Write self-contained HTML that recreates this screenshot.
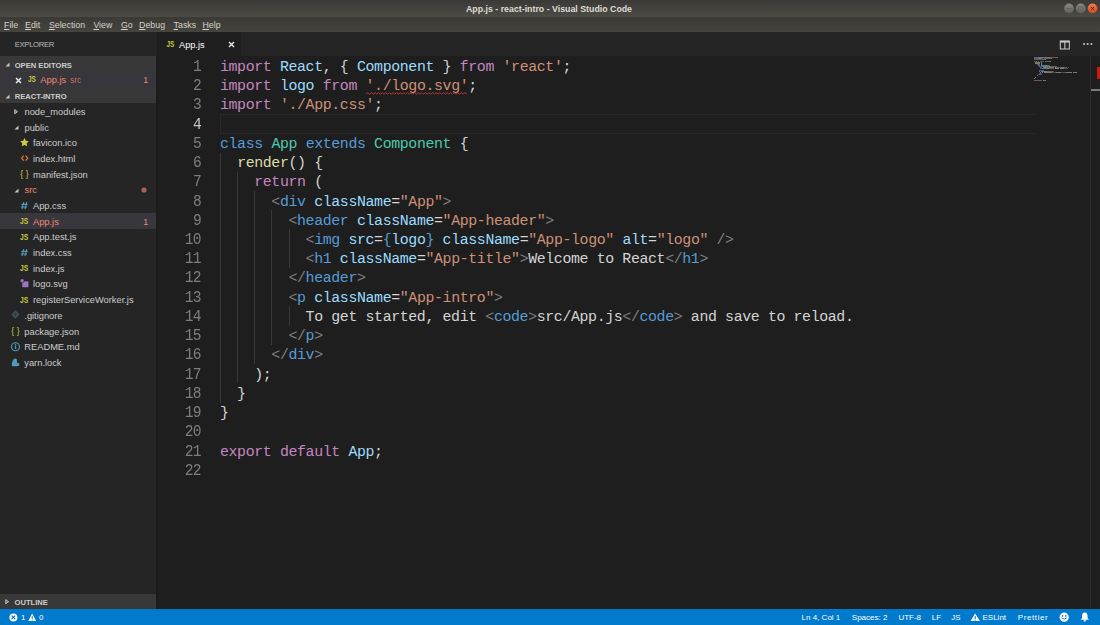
<!DOCTYPE html>
<html><head><meta charset="utf-8">
<style>
*{margin:0;padding:0;box-sizing:border-box}
html,body{width:1100px;height:625px;overflow:hidden;background:#1e1e1e;font-family:"Liberation Sans",sans-serif}
.r{position:absolute}
.t{position:absolute;white-space:pre}
u{text-decoration:underline;text-underline-offset:0.6px;text-decoration-thickness:0.8px}
</style></head><body>
<div class="r" style="left:0px;top:0px;width:1100px;height:17px;background:linear-gradient(#3a3935,#4c4b46);"></div>
<div class="t" style="left:466.00px;top:-1px;font-size:8.8px;line-height:20px;color:#dfdbd2;font-weight:700">App.js - react-intro - Visual Studio Code</div>
<svg class="r" style="left:1063px;top:3px" width="36" height="11" viewBox="0 0 36 11"><defs><linearGradient id="gb" x1="0" y1="0" x2="0" y2="1"><stop offset="0" stop-color="#8b8984"/><stop offset="1" stop-color="#62605b"/></linearGradient><linearGradient id="go" x1="0" y1="0" x2="0" y2="1"><stop offset="0" stop-color="#f47a4a"/><stop offset="1" stop-color="#d9481a"/></linearGradient></defs><circle cx="6" cy="5.4" r="4.8" fill="url(#gb)"/><rect x="3.7" y="5" width="4.6" height="1.1" fill="#62605b"/><circle cx="17.8" cy="5.4" r="4.8" fill="url(#gb)"/><rect x="15.5" y="3.8" width="4.6" height="3.3" fill="none" stroke="#62605b" stroke-width="0.9"/><circle cx="29.5" cy="5.4" r="4.8" fill="url(#go)"/><path d="M28.1 4 L30.9 6.8 M30.9 4 L28.1 6.8" stroke="#4a2a1a" stroke-width="1"/></svg>
<div class="r" style="left:0px;top:17px;width:1100px;height:15px;background:linear-gradient(#3b3a36,#42413c 85%,#47453f);"></div>
<div class="t" style="left:4.00px;top:15px;font-size:8.8px;line-height:20px;color:#d6d2c9"><u>F</u>ile</div>
<div class="t" style="left:25.10px;top:15px;font-size:8.8px;line-height:20px;color:#d6d2c9"><u>E</u>dit</div>
<div class="t" style="left:48.90px;top:15px;font-size:8.8px;line-height:20px;color:#d6d2c9"><u>S</u>election</div>
<div class="t" style="left:93.40px;top:15px;font-size:8.8px;line-height:20px;color:#d6d2c9"><u>V</u>iew</div>
<div class="t" style="left:120.90px;top:15px;font-size:8.8px;line-height:20px;color:#d6d2c9"><u>G</u>o</div>
<div class="t" style="left:139.10px;top:15px;font-size:8.8px;line-height:20px;color:#d6d2c9"><u>D</u>ebug</div>
<div class="t" style="left:173.60px;top:15px;font-size:8.8px;line-height:20px;color:#d6d2c9"><u>T</u>asks</div>
<div class="t" style="left:202.50px;top:15px;font-size:8.8px;line-height:20px;color:#d6d2c9"><u>H</u>elp</div>
<div class="r" style="left:0px;top:32px;width:156px;height:577px;background:#252526;"></div>
<div class="t" style="left:14.80px;top:35px;font-size:7.7px;line-height:20px;color:#bbbbbb;letter-spacing:-0.35px">EXPLORER</div>
<div class="r" style="left:0px;top:56.4px;width:156px;height:15.69px;background:#383838;"></div>
<svg class="r" style="left:5px;top:62.4px" width="5" height="5" viewBox="0 0 5 5"><path d="M4.5 0.5 L4.5 4.5 L0.5 4.5 Z" fill="#c5c5c5"/></svg>
<div class="t" style="left:14.70px;top:56px;font-size:7.6px;line-height:20px;color:#cccccc;font-weight:700">OPEN EDITORS</div>
<div class="r" style="left:0px;top:72.09px;width:156px;height:15.69px;background:#36363c;"></div>
<svg class="r" style="left:14.5px;top:76.69px" width="7" height="7" viewBox="0 0 7 7"><path d="M1 1 L6 6 M6 1 L1 6" stroke="#e8e8e8" stroke-width="1.5"/></svg>
<svg class="r" style="left:27.5px;top:74.29px" width="10" height="9" viewBox="0 0 10 9"><text x="0" y="8" font-family="Liberation Sans" font-weight="700" font-size="8.4" fill="#cbcb41" textLength="7.9" lengthAdjust="spacingAndGlyphs">JS</text></svg>
<div class="t" style="left:40.30px;top:70px;font-size:9.3px;line-height:20px;color:#f48771">App.js</div>
<div class="t" style="left:69.90px;top:70px;font-size:8.6px;line-height:20px;color:#c5705f">src</div>
<div class="t" style="left:143.30px;top:70px;font-size:8.8px;line-height:20px;color:#f48771">1</div>
<div class="r" style="left:0px;top:87.78px;width:156px;height:15.69px;background:#383838;"></div>
<svg class="r" style="left:5px;top:93.78px" width="5" height="5" viewBox="0 0 5 5"><path d="M4.5 0.5 L4.5 4.5 L0.5 4.5 Z" fill="#c5c5c5"/></svg>
<div class="t" style="left:14.70px;top:87px;font-size:7.6px;line-height:20px;color:#cccccc;font-weight:700">REACT-INTRO</div>
<svg class="r" style="left:14.3px;top:108.97px" width="5" height="6" viewBox="0 0 5 6"><path d="M0.7 0.6 L3.6 2.7 L0.7 4.8 Z" fill="#6a6a6a" stroke="#c5c5c5" stroke-width="0.9"/></svg>
<div class="t" style="left:24.50px;top:102px;font-size:9.3px;line-height:20px;color:#cccccc">node_modules</div>
<svg class="r" style="left:13.5px;top:125.16px" width="5" height="5" viewBox="0 0 5 5"><path d="M4.5 0.5 L4.5 4.5 L0.5 4.5 Z" fill="#c5c5c5"/></svg>
<div class="t" style="left:24.50px;top:118px;font-size:9.3px;line-height:20px;color:#cccccc">public</div>
<svg class="r" style="left:0;top:134.85px" width="40" height="16"><path d="M24.50 3.00 L25.85 5.74 L28.87 6.18 L26.69 8.31 L27.20 11.32 L24.50 9.90 L21.80 11.32 L22.31 8.31 L20.13 6.18 L23.15 5.74 Z" fill="#cbcb41"/></svg>
<div class="t" style="left:33.00px;top:133px;font-size:9.3px;line-height:20px;color:#cccccc">favicon.ico</div>
<svg class="r" style="left:0;top:150.54px" width="40" height="16"><path d="M23.8 4.7 L21.599999999999998 7.2 L23.8 9.7 M25.6 4.7 L27.799999999999997 7.2 L25.6 9.7" fill="none" stroke="#e37933" stroke-width="1.2"/></svg>
<div class="t" style="left:33.00px;top:149px;font-size:9.3px;line-height:20px;color:#cccccc">index.html</div>
<svg class="r" style="left:0;top:166.23px" width="40" height="16"><text x="20.2" y="10.8" font-family="Liberation Sans" font-size="8.6" fill="#cbcb41" textLength="8.4" lengthAdjust="spacing">{ }</text></svg>
<div class="t" style="left:33.00px;top:165px;font-size:9.3px;line-height:20px;color:#cccccc">manifest.json</div>
<svg class="r" style="left:13.5px;top:187.92px" width="5" height="5" viewBox="0 0 5 5"><path d="M4.5 0.5 L4.5 4.5 L0.5 4.5 Z" fill="#c5c5c5"/></svg>
<div class="t" style="left:24.50px;top:180px;font-size:9.3px;line-height:20px;color:#f48771">src</div>
<svg class="r" style="left:141px;top:186.92px" width="6" height="6" viewBox="0 0 6 6"><circle cx="3" cy="3" r="2.6" fill="#a8625a"/></svg>
<svg class="r" style="left:0;top:197.61px" width="40" height="16"><path d="M23.8 4.2 L22.0 11.2 M26.799999999999997 4.2 L25.0 11.2 M21.4 6.4 L27.6 6.4 M20.8 9.0 L27.0 9.0" fill="none" stroke="#519aba" stroke-width="1.1"/></svg>
<div class="t" style="left:33.00px;top:196px;font-size:9.3px;line-height:20px;color:#cccccc">App.css</div>
<div class="r" style="left:0px;top:213.3px;width:156px;height:15.69px;background:#37373d;"></div>
<div class="t" style="left:143.30px;top:212px;font-size:8.8px;line-height:20px;color:#f48771">1</div>
<svg class="r" style="left:0;top:213.30px" width="40" height="16"><text x="20.0" y="10.7" font-family="Liberation Sans" font-weight="700" font-size="8.4" fill="#cbcb41" textLength="8.2" lengthAdjust="spacingAndGlyphs">JS</text></svg>
<div class="t" style="left:33.00px;top:212px;font-size:9.3px;line-height:20px;color:#f48771">App.js</div>
<svg class="r" style="left:0;top:228.99px" width="40" height="16"><text x="20.0" y="10.7" font-family="Liberation Sans" font-weight="700" font-size="8.4" fill="#cbcb41" textLength="8.2" lengthAdjust="spacingAndGlyphs">JS</text></svg>
<div class="t" style="left:33.00px;top:227px;font-size:9.3px;line-height:20px;color:#cccccc">App.test.js</div>
<svg class="r" style="left:0;top:244.68px" width="40" height="16"><path d="M23.8 4.2 L22.0 11.2 M26.799999999999997 4.2 L25.0 11.2 M21.4 6.4 L27.6 6.4 M20.8 9.0 L27.0 9.0" fill="none" stroke="#519aba" stroke-width="1.1"/></svg>
<div class="t" style="left:33.00px;top:243px;font-size:9.3px;line-height:20px;color:#cccccc">index.css</div>
<svg class="r" style="left:0;top:260.37px" width="40" height="16"><text x="20.0" y="10.7" font-family="Liberation Sans" font-weight="700" font-size="8.4" fill="#cbcb41" textLength="8.2" lengthAdjust="spacingAndGlyphs">JS</text></svg>
<div class="t" style="left:33.00px;top:259px;font-size:9.3px;line-height:20px;color:#cccccc">index.js</div>
<svg class="r" style="left:0;top:276.06px" width="40" height="16"><rect x="22.3" y="5.4" width="6.1" height="5.8" fill="#a074c4"/><circle cx="22.099999999999998" cy="4.7" r="2.3" fill="#252526"/><circle cx="22.099999999999998" cy="4.7" r="1.7" fill="#a074c4"/></svg>
<div class="t" style="left:33.00px;top:274px;font-size:9.3px;line-height:20px;color:#cccccc">logo.svg</div>
<svg class="r" style="left:0;top:291.75px" width="40" height="16"><text x="20.0" y="10.7" font-family="Liberation Sans" font-weight="700" font-size="8.4" fill="#cbcb41" textLength="8.2" lengthAdjust="spacingAndGlyphs">JS</text></svg>
<div class="t" style="left:33.00px;top:290px;font-size:9.3px;line-height:20px;color:#cccccc">registerServiceWorker.js</div>
<svg class="r" style="left:0;top:307.44px" width="40" height="16"><path d="M15.399999999999999 3.3 L19.4 7.5 L15.399999999999999 11.7 L11.399999999999999 7.5 Z" fill="#41535b"/><path d="M15.399999999999999 5.3 L17.4 7.5 L15.399999999999999 9.7 L13.399999999999999 7.5 Z" fill="#2e3a40"/></svg>
<div class="t" style="left:24.30px;top:306px;font-size:9.3px;line-height:20px;color:#cccccc">.gitignore</div>
<svg class="r" style="left:0;top:323.13px" width="40" height="16"><text x="11.2" y="10.8" font-family="Liberation Sans" font-size="8.6" fill="#cbcb41" textLength="8.4" lengthAdjust="spacing">{ }</text></svg>
<div class="t" style="left:24.30px;top:322px;font-size:9.3px;line-height:20px;color:#cccccc">package.json</div>
<svg class="r" style="left:0;top:338.82px" width="40" height="16"><circle cx="15.5" cy="7.7" r="4.0" fill="none" stroke="#519aba" stroke-width="1.1"/><rect x="14.899999999999999" y="6.4" width="1.3" height="3.5" fill="#519aba"/><rect x="14.899999999999999" y="4.8" width="1.3" height="1.1" fill="#519aba"/></svg>
<div class="t" style="left:24.30px;top:337px;font-size:9.3px;line-height:20px;color:#cccccc">README.md</div>
<svg class="r" style="left:0;top:354.51px" width="40" height="16"><path d="M12 11.2 C11.5 8.8 12.1 6.4 13.3 4.7 C14.1 3.5 16 3.1 16.9 4.3 L16.9 7.6 C17.9 7.8 19.5 8.5 19.4 9.8 C19.3 10.9 18.4 11.2 17.4 11.2 Z" fill="#519aba"/></svg>
<div class="t" style="left:24.30px;top:353px;font-size:9.3px;line-height:20px;color:#cccccc">yarn.lock</div>
<div class="r" style="left:0px;top:593.9px;width:156px;height:15.1px;background:#383838;"></div>
<svg class="r" style="left:4.8px;top:599px" width="5" height="6" viewBox="0 0 5 6"><path d="M0.7 0.6 L3.6 2.7 L0.7 4.8 Z" fill="#6a6a6a" stroke="#c5c5c5" stroke-width="0.9"/></svg>
<div class="t" style="left:14.60px;top:593px;font-size:7.6px;line-height:20px;color:#cccccc;font-weight:700">OUTLINE</div>
<div class="r" style="left:156px;top:32px;width:944px;height:24.4px;background:#252526;"></div>
<div class="r" style="left:156.5px;top:32px;width:84.5px;height:24.4px;background:#1e1e1e;"></div>
<svg class="r" style="left:160px;top:32px" width="20" height="24"><text x="6.4" y="15.2" font-family="Liberation Sans" font-weight="700" font-size="8.4" fill="#cbcb41" textLength="7.8" lengthAdjust="spacingAndGlyphs">JS</text></svg>
<div class="t" style="left:179.00px;top:35px;font-size:9.2px;line-height:20px;color:#ffffff">App.js</div>
<svg class="r" style="left:227.7px;top:40.6px" width="7" height="7" viewBox="0 0 7 7"><path d="M1 1 L6 6 M6 1 L1 6" stroke="#e8e8e8" stroke-width="1.4"/></svg>
<svg class="r" style="left:1059px;top:39.5px" width="12" height="11" viewBox="0 0 12 11"><rect x="1.3" y="1.0" width="9.0" height="8.0" fill="none" stroke="#c5c5c5" stroke-width="1.05"/><rect x="5.3" y="1.0" width="1.1" height="8.0" fill="#c5c5c5"/><rect x="1.3" y="0.9" width="9.0" height="1.7" fill="#c5c5c5"/></svg>
<svg class="r" style="left:1082px;top:42px" width="12" height="4" viewBox="0 0 12 4"><circle cx="2.1" cy="2.0" r="1.05" fill="#c5c5c5"/><circle cx="5.7" cy="2.0" r="1.05" fill="#c5c5c5"/><circle cx="9.4" cy="2.0" r="1.05" fill="#c5c5c5"/></svg>
<div class="r" style="left:156px;top:56.4px;width:944px;height:552.6px;background:#1e1e1e;"></div>
<div class="r" style="left:156px;top:56.4px;width:1.6px;height:552.6px;background:#1b1b1b;"></div>
<div class="r" style="left:220px;top:114.3px;width:814.5px;height:19.4px;background:transparent;border:1px solid #282828;border-right:none"></div>
<div class="r" style="left:220.0px;top:152.55px;width:1px;height:249.99px;background:#383838;"></div>
<div class="r" style="left:237.1px;top:171.78px;width:1px;height:211.53px;background:#383838;"></div>
<div class="r" style="left:254.3px;top:191.01px;width:1px;height:173.07px;background:#383838;"></div>
<div class="r" style="left:271.4px;top:210.24px;width:1px;height:134.61px;background:#383838;"></div>
<div class="r" style="left:288.5px;top:229.47px;width:1px;height:38.46px;background:#383838;"></div>
<div class="r" style="left:288.5px;top:306.39px;width:1px;height:19.23px;background:#383838;"></div>
<div class="t" style="left:220.00px;top:57px;font-size:14.9px;line-height:20px;color:#D4D4D4;letter-spacing:-0.3763px;font-family:'Liberation Mono',monospace"><span style="color:#C586C0">import</span> <span style="color:#9CDCFE">React</span>, { <span style="color:#9CDCFE">Component</span> } <span style="color:#C586C0">from</span> <span style="color:#CE9178">'react'</span>;</div>
<div class="t" style="left:192.03px;top:57px;font-size:16.2px;line-height:20px;color:#7e7e7e;letter-spacing:-0.85px;font-family:'Liberation Mono',monospace;transform:scaleX(0.9);transform-origin:right">1</div>
<div class="t" style="left:220.00px;top:76px;font-size:14.9px;line-height:20px;color:#D4D4D4;letter-spacing:-0.3763px;font-family:'Liberation Mono',monospace"><span style="color:#C586C0">import</span> <span style="color:#9CDCFE">logo</span> <span style="color:#C586C0">from</span> <span style="color:#CE9178">'./logo.svg'</span>;</div>
<div class="t" style="left:192.03px;top:76px;font-size:16.2px;line-height:20px;color:#7e7e7e;letter-spacing:-0.85px;font-family:'Liberation Mono',monospace;transform:scaleX(0.9);transform-origin:right">2</div>
<div class="t" style="left:220.00px;top:95px;font-size:14.9px;line-height:20px;color:#D4D4D4;letter-spacing:-0.3763px;font-family:'Liberation Mono',monospace"><span style="color:#C586C0">import</span> <span style="color:#CE9178">'./App.css'</span>;</div>
<div class="t" style="left:192.03px;top:95px;font-size:16.2px;line-height:20px;color:#7e7e7e;letter-spacing:-0.85px;font-family:'Liberation Mono',monospace;transform:scaleX(0.9);transform-origin:right">3</div>
<div class="t" style="left:192.03px;top:115px;font-size:16.2px;line-height:20px;color:#c6c6c6;letter-spacing:-0.85px;font-family:'Liberation Mono',monospace;transform:scaleX(0.9);transform-origin:right">4</div>
<div class="t" style="left:220.00px;top:134px;font-size:14.9px;line-height:20px;color:#D4D4D4;letter-spacing:-0.3763px;font-family:'Liberation Mono',monospace"><span style="color:#569CD6">class</span> <span style="color:#4EC9B0">App</span> <span style="color:#569CD6">extends</span> <span style="color:#4EC9B0">Component</span> {</div>
<div class="t" style="left:192.03px;top:134px;font-size:16.2px;line-height:20px;color:#7e7e7e;letter-spacing:-0.85px;font-family:'Liberation Mono',monospace;transform:scaleX(0.9);transform-origin:right">5</div>
<div class="t" style="left:220.00px;top:153px;font-size:14.9px;line-height:20px;color:#D4D4D4;letter-spacing:-0.3763px;font-family:'Liberation Mono',monospace">  <span style="color:#DCDCAA">render</span>() {</div>
<div class="t" style="left:192.03px;top:153px;font-size:16.2px;line-height:20px;color:#7e7e7e;letter-spacing:-0.85px;font-family:'Liberation Mono',monospace;transform:scaleX(0.9);transform-origin:right">6</div>
<div class="t" style="left:220.00px;top:172px;font-size:14.9px;line-height:20px;color:#D4D4D4;letter-spacing:-0.3763px;font-family:'Liberation Mono',monospace">    <span style="color:#C586C0">return</span> (</div>
<div class="t" style="left:192.03px;top:172px;font-size:16.2px;line-height:20px;color:#7e7e7e;letter-spacing:-0.85px;font-family:'Liberation Mono',monospace;transform:scaleX(0.9);transform-origin:right">7</div>
<div class="t" style="left:220.00px;top:192px;font-size:14.9px;line-height:20px;color:#D4D4D4;letter-spacing:-0.3763px;font-family:'Liberation Mono',monospace">      <span style="color:#808080">&lt;</span><span style="color:#569CD6">div</span> <span style="color:#9CDCFE">className</span>=<span style="color:#CE9178">"App"</span><span style="color:#808080">&gt;</span></div>
<div class="t" style="left:192.03px;top:192px;font-size:16.2px;line-height:20px;color:#7e7e7e;letter-spacing:-0.85px;font-family:'Liberation Mono',monospace;transform:scaleX(0.9);transform-origin:right">8</div>
<div class="t" style="left:220.00px;top:211px;font-size:14.9px;line-height:20px;color:#D4D4D4;letter-spacing:-0.3763px;font-family:'Liberation Mono',monospace">        <span style="color:#808080">&lt;</span><span style="color:#569CD6">header</span> <span style="color:#9CDCFE">className</span>=<span style="color:#CE9178">"App-header"</span><span style="color:#808080">&gt;</span></div>
<div class="t" style="left:192.03px;top:211px;font-size:16.2px;line-height:20px;color:#7e7e7e;letter-spacing:-0.85px;font-family:'Liberation Mono',monospace;transform:scaleX(0.9);transform-origin:right">9</div>
<div class="t" style="left:220.00px;top:230px;font-size:14.9px;line-height:20px;color:#D4D4D4;letter-spacing:-0.3763px;font-family:'Liberation Mono',monospace">          <span style="color:#808080">&lt;</span><span style="color:#569CD6">img</span> <span style="color:#9CDCFE">src</span>=<span style="color:#569CD6">{</span><span style="color:#9CDCFE">logo</span><span style="color:#569CD6">}</span> <span style="color:#9CDCFE">className</span>=<span style="color:#CE9178">"App-logo"</span> <span style="color:#9CDCFE">alt</span>=<span style="color:#CE9178">"logo"</span> <span style="color:#808080">/&gt;</span></div>
<div class="t" style="left:183.47px;top:230px;font-size:16.2px;line-height:20px;color:#7e7e7e;letter-spacing:-0.85px;font-family:'Liberation Mono',monospace;transform:scaleX(0.9);transform-origin:right">10</div>
<div class="t" style="left:220.00px;top:249px;font-size:14.9px;line-height:20px;color:#D4D4D4;letter-spacing:-0.3763px;font-family:'Liberation Mono',monospace">          <span style="color:#808080">&lt;</span><span style="color:#569CD6">h1</span> <span style="color:#9CDCFE">className</span>=<span style="color:#CE9178">"App-title"</span><span style="color:#808080">&gt;</span>Welcome to React<span style="color:#808080">&lt;/</span><span style="color:#569CD6">h1</span><span style="color:#808080">&gt;</span></div>
<div class="t" style="left:183.47px;top:249px;font-size:16.2px;line-height:20px;color:#7e7e7e;letter-spacing:-0.85px;font-family:'Liberation Mono',monospace;transform:scaleX(0.9);transform-origin:right">11</div>
<div class="t" style="left:220.00px;top:268px;font-size:14.9px;line-height:20px;color:#D4D4D4;letter-spacing:-0.3763px;font-family:'Liberation Mono',monospace">        <span style="color:#808080">&lt;/</span><span style="color:#569CD6">header</span><span style="color:#808080">&gt;</span></div>
<div class="t" style="left:183.47px;top:268px;font-size:16.2px;line-height:20px;color:#7e7e7e;letter-spacing:-0.85px;font-family:'Liberation Mono',monospace;transform:scaleX(0.9);transform-origin:right">12</div>
<div class="t" style="left:220.00px;top:288px;font-size:14.9px;line-height:20px;color:#D4D4D4;letter-spacing:-0.3763px;font-family:'Liberation Mono',monospace">        <span style="color:#808080">&lt;</span><span style="color:#569CD6">p</span> <span style="color:#9CDCFE">className</span>=<span style="color:#CE9178">"App-intro"</span><span style="color:#808080">&gt;</span></div>
<div class="t" style="left:183.47px;top:288px;font-size:16.2px;line-height:20px;color:#7e7e7e;letter-spacing:-0.85px;font-family:'Liberation Mono',monospace;transform:scaleX(0.9);transform-origin:right">13</div>
<div class="t" style="left:220.00px;top:307px;font-size:14.9px;line-height:20px;color:#D4D4D4;letter-spacing:-0.3763px;font-family:'Liberation Mono',monospace">          To get started, edit <span style="color:#808080">&lt;</span><span style="color:#569CD6">code</span><span style="color:#808080">&gt;</span>src/App.js<span style="color:#808080">&lt;/</span><span style="color:#569CD6">code</span><span style="color:#808080">&gt;</span> and save to reload.</div>
<div class="t" style="left:183.47px;top:307px;font-size:16.2px;line-height:20px;color:#7e7e7e;letter-spacing:-0.85px;font-family:'Liberation Mono',monospace;transform:scaleX(0.9);transform-origin:right">14</div>
<div class="t" style="left:220.00px;top:326px;font-size:14.9px;line-height:20px;color:#D4D4D4;letter-spacing:-0.3763px;font-family:'Liberation Mono',monospace">        <span style="color:#808080">&lt;/</span><span style="color:#569CD6">p</span><span style="color:#808080">&gt;</span></div>
<div class="t" style="left:183.47px;top:326px;font-size:16.2px;line-height:20px;color:#7e7e7e;letter-spacing:-0.85px;font-family:'Liberation Mono',monospace;transform:scaleX(0.9);transform-origin:right">15</div>
<div class="t" style="left:220.00px;top:345px;font-size:14.9px;line-height:20px;color:#D4D4D4;letter-spacing:-0.3763px;font-family:'Liberation Mono',monospace">      <span style="color:#808080">&lt;/</span><span style="color:#569CD6">div</span><span style="color:#808080">&gt;</span></div>
<div class="t" style="left:183.47px;top:345px;font-size:16.2px;line-height:20px;color:#7e7e7e;letter-spacing:-0.85px;font-family:'Liberation Mono',monospace;transform:scaleX(0.9);transform-origin:right">16</div>
<div class="t" style="left:220.00px;top:365px;font-size:14.9px;line-height:20px;color:#D4D4D4;letter-spacing:-0.3763px;font-family:'Liberation Mono',monospace">    );</div>
<div class="t" style="left:183.47px;top:365px;font-size:16.2px;line-height:20px;color:#7e7e7e;letter-spacing:-0.85px;font-family:'Liberation Mono',monospace;transform:scaleX(0.9);transform-origin:right">17</div>
<div class="t" style="left:220.00px;top:384px;font-size:14.9px;line-height:20px;color:#D4D4D4;letter-spacing:-0.3763px;font-family:'Liberation Mono',monospace">  }</div>
<div class="t" style="left:183.47px;top:384px;font-size:16.2px;line-height:20px;color:#7e7e7e;letter-spacing:-0.85px;font-family:'Liberation Mono',monospace;transform:scaleX(0.9);transform-origin:right">18</div>
<div class="t" style="left:220.00px;top:403px;font-size:14.9px;line-height:20px;color:#D4D4D4;letter-spacing:-0.3763px;font-family:'Liberation Mono',monospace">}</div>
<div class="t" style="left:183.47px;top:403px;font-size:16.2px;line-height:20px;color:#7e7e7e;letter-spacing:-0.85px;font-family:'Liberation Mono',monospace;transform:scaleX(0.9);transform-origin:right">19</div>
<div class="t" style="left:183.47px;top:422px;font-size:16.2px;line-height:20px;color:#7e7e7e;letter-spacing:-0.85px;font-family:'Liberation Mono',monospace;transform:scaleX(0.9);transform-origin:right">20</div>
<div class="t" style="left:220.00px;top:442px;font-size:14.9px;line-height:20px;color:#D4D4D4;letter-spacing:-0.3763px;font-family:'Liberation Mono',monospace"><span style="color:#C586C0">export</span> <span style="color:#C586C0">default</span> <span style="color:#9CDCFE">App</span>;</div>
<div class="t" style="left:183.47px;top:442px;font-size:16.2px;line-height:20px;color:#7e7e7e;letter-spacing:-0.85px;font-family:'Liberation Mono',monospace;transform:scaleX(0.9);transform-origin:right">21</div>
<div class="t" style="left:183.47px;top:461px;font-size:16.2px;line-height:20px;color:#7e7e7e;letter-spacing:-0.85px;font-family:'Liberation Mono',monospace;transform:scaleX(0.9);transform-origin:right">22</div>
<svg class="r" style="left:366px;top:92.2px" width="104" height="3" viewBox="0 0 104 3"><path d="M0.0 2.2L1.8 0.6L3.6 2.2L5.4 0.6L7.2 2.2L9.0 0.6L10.8 2.2L12.6 0.6L14.4 2.2L16.2 0.6L18.0 2.2L19.8 0.6L21.6 2.2L23.4 0.6L25.2 2.2L27.0 0.6L28.8 2.2L30.6 0.6L32.4 2.2L34.2 0.6L36.0 2.2L37.8 0.6L39.6 2.2L41.4 0.6L43.2 2.2L45.0 0.6L46.8 2.2L48.6 0.6L50.4 2.2L52.2 0.6L54.0 2.2L55.8 0.6L57.6 2.2L59.4 0.6L61.2 2.2L63.0 0.6L64.8 2.2L66.6 0.6L68.4 2.2L70.2 0.6L72.0 2.2L73.8 0.6L75.6 2.2L77.4 0.6L79.2 2.2L81.0 0.6L82.8 2.2L84.6 0.6L86.4 2.2L88.2 0.6L90.0 2.2L91.8 0.6L93.6 2.2L95.4 0.6L97.2 2.2L99.0 0.6L100.8 2.2" fill="none" stroke="#c43c3c" stroke-width="0.9"/></svg>
<div class="r" style="left:0;top:0;width:1100px;height:100px;filter:blur(0.35px)">
<div class="r" style="left:1034.20px;top:56.60px;width:3.48px;height:1.1px;background:#C586C0;opacity:.5"></div>
<div class="r" style="left:1038.26px;top:56.60px;width:2.90px;height:1.1px;background:#9CDCFE;opacity:.5"></div>
<div class="r" style="left:1041.16px;top:56.60px;width:0.58px;height:1.1px;background:#D4D4D4;opacity:.5"></div>
<div class="r" style="left:1042.32px;top:56.60px;width:0.58px;height:1.1px;background:#D4D4D4;opacity:.5"></div>
<div class="r" style="left:1043.48px;top:56.60px;width:5.22px;height:1.1px;background:#9CDCFE;opacity:.5"></div>
<div class="r" style="left:1049.28px;top:56.60px;width:0.58px;height:1.1px;background:#D4D4D4;opacity:.5"></div>
<div class="r" style="left:1050.44px;top:56.60px;width:2.32px;height:1.1px;background:#C586C0;opacity:.5"></div>
<div class="r" style="left:1053.34px;top:56.60px;width:4.06px;height:1.1px;background:#CE9178;opacity:.5"></div>
<div class="r" style="left:1057.40px;top:56.60px;width:0.58px;height:1.1px;background:#D4D4D4;opacity:.5"></div>
<div class="r" style="left:1034.20px;top:57.77px;width:3.48px;height:1.1px;background:#C586C0;opacity:.5"></div>
<div class="r" style="left:1038.26px;top:57.77px;width:2.32px;height:1.1px;background:#9CDCFE;opacity:.5"></div>
<div class="r" style="left:1041.16px;top:57.77px;width:2.32px;height:1.1px;background:#C586C0;opacity:.5"></div>
<div class="r" style="left:1044.06px;top:57.77px;width:6.96px;height:1.1px;background:#CE9178;opacity:.5"></div>
<div class="r" style="left:1051.02px;top:57.77px;width:0.58px;height:1.1px;background:#D4D4D4;opacity:.5"></div>
<div class="r" style="left:1034.20px;top:58.95px;width:3.48px;height:1.1px;background:#C586C0;opacity:.5"></div>
<div class="r" style="left:1038.26px;top:58.95px;width:6.38px;height:1.1px;background:#CE9178;opacity:.5"></div>
<div class="r" style="left:1044.64px;top:58.95px;width:0.58px;height:1.1px;background:#D4D4D4;opacity:.5"></div>
<div class="r" style="left:1034.20px;top:61.30px;width:2.90px;height:1.1px;background:#569CD6;opacity:.5"></div>
<div class="r" style="left:1037.68px;top:61.30px;width:1.74px;height:1.1px;background:#4EC9B0;opacity:.5"></div>
<div class="r" style="left:1040.00px;top:61.30px;width:4.06px;height:1.1px;background:#569CD6;opacity:.5"></div>
<div class="r" style="left:1044.64px;top:61.30px;width:5.22px;height:1.1px;background:#4EC9B0;opacity:.5"></div>
<div class="r" style="left:1050.44px;top:61.30px;width:0.58px;height:1.1px;background:#D4D4D4;opacity:.5"></div>
<div class="r" style="left:1035.36px;top:62.48px;width:3.48px;height:1.1px;background:#DCDCAA;opacity:.5"></div>
<div class="r" style="left:1038.84px;top:62.48px;width:1.16px;height:1.1px;background:#D4D4D4;opacity:.5"></div>
<div class="r" style="left:1040.58px;top:62.48px;width:0.58px;height:1.1px;background:#D4D4D4;opacity:.5"></div>
<div class="r" style="left:1036.52px;top:63.65px;width:3.48px;height:1.1px;background:#C586C0;opacity:.5"></div>
<div class="r" style="left:1040.58px;top:63.65px;width:0.58px;height:1.1px;background:#D4D4D4;opacity:.5"></div>
<div class="r" style="left:1037.68px;top:64.83px;width:0.58px;height:1.1px;background:#808080;opacity:.5"></div>
<div class="r" style="left:1038.26px;top:64.83px;width:1.74px;height:1.1px;background:#569CD6;opacity:.5"></div>
<div class="r" style="left:1040.58px;top:64.83px;width:5.22px;height:1.1px;background:#9CDCFE;opacity:.5"></div>
<div class="r" style="left:1045.80px;top:64.83px;width:0.58px;height:1.1px;background:#D4D4D4;opacity:.5"></div>
<div class="r" style="left:1046.38px;top:64.83px;width:2.90px;height:1.1px;background:#CE9178;opacity:.5"></div>
<div class="r" style="left:1049.28px;top:64.83px;width:0.58px;height:1.1px;background:#808080;opacity:.5"></div>
<div class="r" style="left:1038.84px;top:66.00px;width:0.58px;height:1.1px;background:#808080;opacity:.5"></div>
<div class="r" style="left:1039.42px;top:66.00px;width:3.48px;height:1.1px;background:#569CD6;opacity:.5"></div>
<div class="r" style="left:1043.48px;top:66.00px;width:5.22px;height:1.1px;background:#9CDCFE;opacity:.5"></div>
<div class="r" style="left:1048.70px;top:66.00px;width:0.58px;height:1.1px;background:#D4D4D4;opacity:.5"></div>
<div class="r" style="left:1049.28px;top:66.00px;width:6.96px;height:1.1px;background:#CE9178;opacity:.5"></div>
<div class="r" style="left:1056.24px;top:66.00px;width:0.58px;height:1.1px;background:#808080;opacity:.5"></div>
<div class="r" style="left:1040.00px;top:67.17px;width:0.58px;height:1.1px;background:#808080;opacity:.5"></div>
<div class="r" style="left:1040.58px;top:67.17px;width:1.74px;height:1.1px;background:#569CD6;opacity:.5"></div>
<div class="r" style="left:1042.90px;top:67.17px;width:1.74px;height:1.1px;background:#9CDCFE;opacity:.5"></div>
<div class="r" style="left:1044.64px;top:67.17px;width:0.58px;height:1.1px;background:#D4D4D4;opacity:.5"></div>
<div class="r" style="left:1045.22px;top:67.17px;width:0.58px;height:1.1px;background:#569CD6;opacity:.5"></div>
<div class="r" style="left:1045.80px;top:67.17px;width:2.32px;height:1.1px;background:#9CDCFE;opacity:.5"></div>
<div class="r" style="left:1048.12px;top:67.17px;width:0.58px;height:1.1px;background:#569CD6;opacity:.5"></div>
<div class="r" style="left:1049.28px;top:67.17px;width:5.22px;height:1.1px;background:#9CDCFE;opacity:.5"></div>
<div class="r" style="left:1054.50px;top:67.17px;width:0.58px;height:1.1px;background:#D4D4D4;opacity:.5"></div>
<div class="r" style="left:1055.08px;top:67.17px;width:5.80px;height:1.1px;background:#CE9178;opacity:.5"></div>
<div class="r" style="left:1061.46px;top:67.17px;width:1.74px;height:1.1px;background:#9CDCFE;opacity:.5"></div>
<div class="r" style="left:1063.20px;top:67.17px;width:0.58px;height:1.1px;background:#D4D4D4;opacity:.5"></div>
<div class="r" style="left:1063.78px;top:67.17px;width:3.48px;height:1.1px;background:#CE9178;opacity:.5"></div>
<div class="r" style="left:1067.84px;top:67.17px;width:1.16px;height:1.1px;background:#808080;opacity:.5"></div>
<div class="r" style="left:1040.00px;top:68.35px;width:0.58px;height:1.1px;background:#808080;opacity:.5"></div>
<div class="r" style="left:1040.58px;top:68.35px;width:1.16px;height:1.1px;background:#569CD6;opacity:.5"></div>
<div class="r" style="left:1042.32px;top:68.35px;width:5.22px;height:1.1px;background:#9CDCFE;opacity:.5"></div>
<div class="r" style="left:1047.54px;top:68.35px;width:0.58px;height:1.1px;background:#D4D4D4;opacity:.5"></div>
<div class="r" style="left:1048.12px;top:68.35px;width:6.38px;height:1.1px;background:#CE9178;opacity:.5"></div>
<div class="r" style="left:1054.50px;top:68.35px;width:0.58px;height:1.1px;background:#808080;opacity:.5"></div>
<div class="r" style="left:1055.08px;top:68.35px;width:4.06px;height:1.1px;background:#D4D4D4;opacity:.5"></div>
<div class="r" style="left:1059.72px;top:68.35px;width:1.16px;height:1.1px;background:#D4D4D4;opacity:.5"></div>
<div class="r" style="left:1061.46px;top:68.35px;width:2.90px;height:1.1px;background:#D4D4D4;opacity:.5"></div>
<div class="r" style="left:1064.36px;top:68.35px;width:1.16px;height:1.1px;background:#808080;opacity:.5"></div>
<div class="r" style="left:1065.52px;top:68.35px;width:1.16px;height:1.1px;background:#569CD6;opacity:.5"></div>
<div class="r" style="left:1066.68px;top:68.35px;width:0.58px;height:1.1px;background:#808080;opacity:.5"></div>
<div class="r" style="left:1038.84px;top:69.53px;width:1.16px;height:1.1px;background:#808080;opacity:.5"></div>
<div class="r" style="left:1040.00px;top:69.53px;width:3.48px;height:1.1px;background:#569CD6;opacity:.5"></div>
<div class="r" style="left:1043.48px;top:69.53px;width:0.58px;height:1.1px;background:#808080;opacity:.5"></div>
<div class="r" style="left:1038.84px;top:70.70px;width:0.58px;height:1.1px;background:#808080;opacity:.5"></div>
<div class="r" style="left:1039.42px;top:70.70px;width:0.58px;height:1.1px;background:#569CD6;opacity:.5"></div>
<div class="r" style="left:1040.58px;top:70.70px;width:5.22px;height:1.1px;background:#9CDCFE;opacity:.5"></div>
<div class="r" style="left:1045.80px;top:70.70px;width:0.58px;height:1.1px;background:#D4D4D4;opacity:.5"></div>
<div class="r" style="left:1046.38px;top:70.70px;width:6.38px;height:1.1px;background:#CE9178;opacity:.5"></div>
<div class="r" style="left:1052.76px;top:70.70px;width:0.58px;height:1.1px;background:#808080;opacity:.5"></div>
<div class="r" style="left:1040.00px;top:71.88px;width:1.16px;height:1.1px;background:#D4D4D4;opacity:.5"></div>
<div class="r" style="left:1041.74px;top:71.88px;width:1.74px;height:1.1px;background:#D4D4D4;opacity:.5"></div>
<div class="r" style="left:1044.06px;top:71.88px;width:4.64px;height:1.1px;background:#D4D4D4;opacity:.5"></div>
<div class="r" style="left:1049.28px;top:71.88px;width:2.32px;height:1.1px;background:#D4D4D4;opacity:.5"></div>
<div class="r" style="left:1052.18px;top:71.88px;width:0.58px;height:1.1px;background:#808080;opacity:.5"></div>
<div class="r" style="left:1052.76px;top:71.88px;width:2.32px;height:1.1px;background:#569CD6;opacity:.5"></div>
<div class="r" style="left:1055.08px;top:71.88px;width:0.58px;height:1.1px;background:#808080;opacity:.5"></div>
<div class="r" style="left:1055.66px;top:71.88px;width:5.80px;height:1.1px;background:#D4D4D4;opacity:.5"></div>
<div class="r" style="left:1061.46px;top:71.88px;width:1.16px;height:1.1px;background:#808080;opacity:.5"></div>
<div class="r" style="left:1062.62px;top:71.88px;width:2.32px;height:1.1px;background:#569CD6;opacity:.5"></div>
<div class="r" style="left:1064.94px;top:71.88px;width:0.58px;height:1.1px;background:#808080;opacity:.5"></div>
<div class="r" style="left:1066.10px;top:71.88px;width:1.74px;height:1.1px;background:#D4D4D4;opacity:.5"></div>
<div class="r" style="left:1068.42px;top:71.88px;width:2.32px;height:1.1px;background:#D4D4D4;opacity:.5"></div>
<div class="r" style="left:1071.32px;top:71.88px;width:1.16px;height:1.1px;background:#D4D4D4;opacity:.5"></div>
<div class="r" style="left:1073.06px;top:71.88px;width:4.06px;height:1.1px;background:#D4D4D4;opacity:.5"></div>
<div class="r" style="left:1038.84px;top:73.05px;width:1.16px;height:1.1px;background:#808080;opacity:.5"></div>
<div class="r" style="left:1040.00px;top:73.05px;width:0.58px;height:1.1px;background:#569CD6;opacity:.5"></div>
<div class="r" style="left:1040.58px;top:73.05px;width:0.58px;height:1.1px;background:#808080;opacity:.5"></div>
<div class="r" style="left:1037.68px;top:74.22px;width:1.16px;height:1.1px;background:#808080;opacity:.5"></div>
<div class="r" style="left:1038.84px;top:74.22px;width:1.74px;height:1.1px;background:#569CD6;opacity:.5"></div>
<div class="r" style="left:1040.58px;top:74.22px;width:0.58px;height:1.1px;background:#808080;opacity:.5"></div>
<div class="r" style="left:1036.52px;top:75.40px;width:1.16px;height:1.1px;background:#D4D4D4;opacity:.5"></div>
<div class="r" style="left:1035.36px;top:76.58px;width:0.58px;height:1.1px;background:#D4D4D4;opacity:.5"></div>
<div class="r" style="left:1034.20px;top:77.75px;width:0.58px;height:1.1px;background:#D4D4D4;opacity:.5"></div>
<div class="r" style="left:1034.20px;top:80.10px;width:3.48px;height:1.1px;background:#C586C0;opacity:.5"></div>
<div class="r" style="left:1038.26px;top:80.10px;width:4.06px;height:1.1px;background:#C586C0;opacity:.5"></div>
<div class="r" style="left:1042.90px;top:80.10px;width:1.74px;height:1.1px;background:#9CDCFE;opacity:.5"></div>
<div class="r" style="left:1044.64px;top:80.10px;width:0.58px;height:1.1px;background:#D4D4D4;opacity:.5"></div>
</div>
<div class="r" style="left:1090px;top:56.4px;width:1px;height:552.6px;background:#2c2c2c;"></div>
<div class="r" style="left:1097px;top:67px;width:3px;height:11.6px;background:#d01818;"></div>
<div class="r" style="left:1091px;top:89px;width:9px;height:1.6px;background:#7a7a7a;"></div>
<div class="r" style="left:0px;top:609px;width:1100px;height:16px;background:#007acc;"></div>
<svg class="r" style="left:8.5px;top:612.5px" width="9" height="9" viewBox="0 0 9 9"><circle cx="4.4" cy="4.4" r="4" fill="#ffffff"/><path d="M2.6 2.6 L6.2 6.2 M6.2 2.6 L2.6 6.2" stroke="#007acc" stroke-width="1.2"/></svg>
<div class="t" style="left:21.00px;top:608px;font-size:8px;line-height:20px;color:#ffffff">1</div>
<svg class="r" style="left:27.8px;top:612.8px" width="8.5" height="8.5" viewBox="0 0 8.5 8.5"><path d="M4.2 0.5 L8.2 8 L0.2 8 Z" fill="#ffffff"/><rect x="3.7" y="3" width="1" height="2.8" fill="#007acc"/><rect x="3.7" y="6.4" width="1" height="1" fill="#007acc"/></svg>
<div class="t" style="left:39.00px;top:608px;font-size:8px;line-height:20px;color:#ffffff">0</div>
<div class="t" style="left:801.60px;top:608px;font-size:8px;line-height:20px;color:#ffffff">Ln 4, Col 1</div>
<div class="t" style="left:851.80px;top:608px;font-size:8px;line-height:20px;color:#ffffff">Spaces: 2</div>
<div class="t" style="left:898.40px;top:608px;font-size:8px;line-height:20px;color:#ffffff">UTF-8</div>
<div class="t" style="left:931.80px;top:608px;font-size:8px;line-height:20px;color:#ffffff">LF</div>
<div class="t" style="left:951.30px;top:608px;font-size:8px;line-height:20px;color:#ffffff">JS</div>
<div class="t" style="left:982.50px;top:608px;font-size:8px;line-height:20px;color:#ffffff">ESLint</div>
<div class="t" style="left:1017.80px;top:608px;font-size:8px;line-height:20px;color:#ffffff;letter-spacing:0.6px">Prettier</div>
<svg class="r" style="left:970.2px;top:612.8px" width="10.5" height="8.5" viewBox="0 0 10.5 8.5"><path d="M5.2 0.5 L10 8.2 L0.4 8.2 Z" fill="#ffffff"/><rect x="4.7" y="3" width="1" height="3" fill="#007acc"/><rect x="4.7" y="6.6" width="1" height="1" fill="#007acc"/></svg>
<svg class="r" style="left:1059px;top:612px" width="11" height="11" viewBox="0 0 11 11"><circle cx="5.2" cy="5.2" r="4.6" fill="#ffffff"/><circle cx="3.6" cy="3.9" r="0.8" fill="#007acc"/><circle cx="6.8" cy="3.9" r="0.8" fill="#007acc"/><path d="M2.6 5.8 Q5.2 8.6 7.8 5.8" fill="none" stroke="#007acc" stroke-width="0.9"/></svg>
<svg class="r" style="left:1080px;top:611.8px" width="10" height="10" viewBox="0 0 10 10"><path d="M4.8 0.6 C2.6 0.6 2 2.5 2 4.5 L2 6.3 L0.6 7.8 L9 7.8 L7.6 6.3 L7.6 4.5 C7.6 2.5 7 0.6 4.8 0.6 Z" fill="#ffffff"/><circle cx="4.8" cy="8.6" r="1.1" fill="#ffffff"/></svg>
</body></html>
